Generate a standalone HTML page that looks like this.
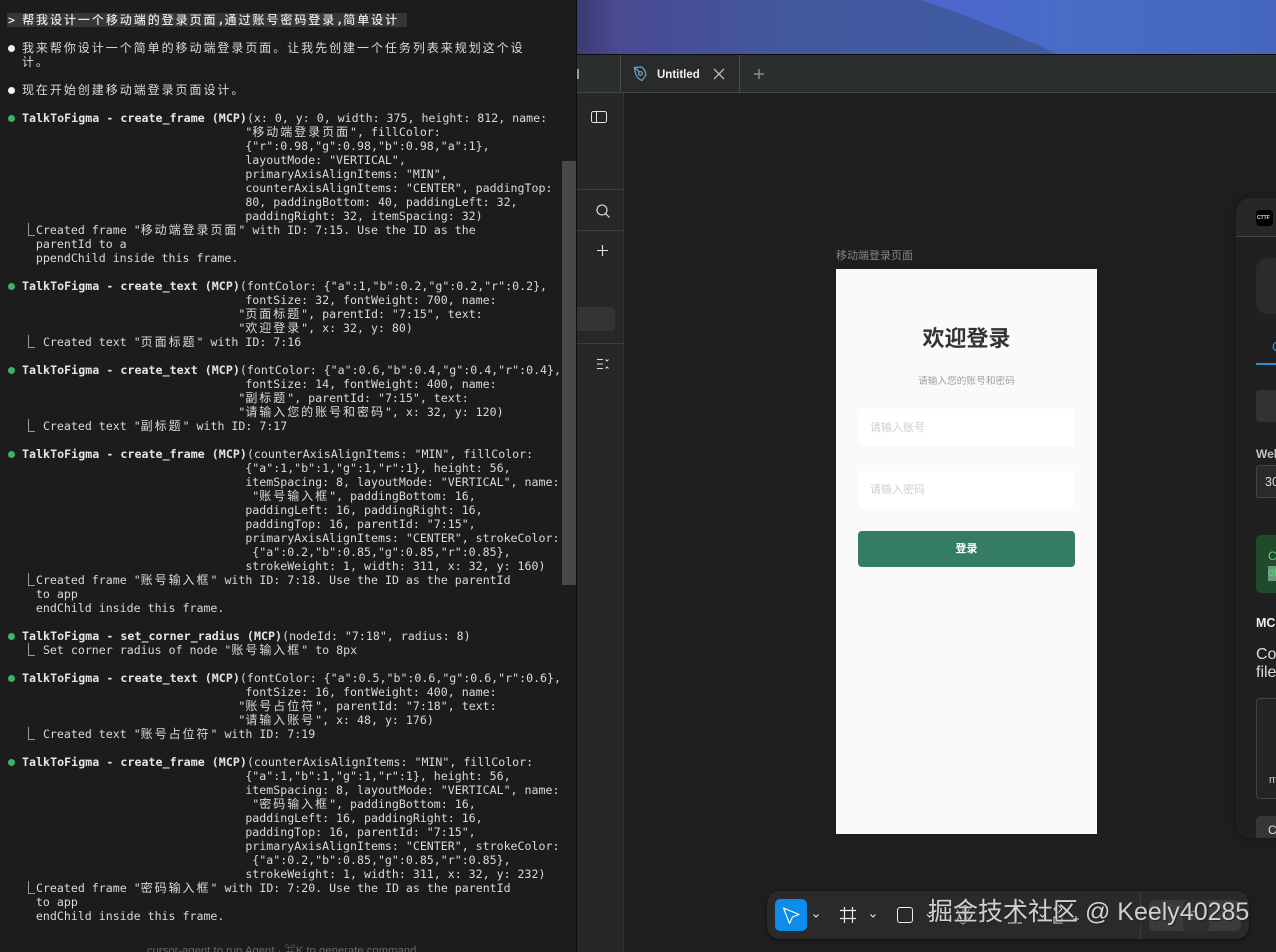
<!DOCTYPE html>
<html lang="zh"><head><meta charset="utf-8"><title>TalkToFigma</title>
<style>
html,body{margin:0;padding:0;background:#1e1e1e}
#r{position:relative;width:1276px;height:952px;overflow:hidden;background:#1e1e1e;font-family:"Liberation Sans","Noto Sans CJK SC",sans-serif}
#r div,#r svg,#r span.a{position:absolute}
#term{left:0;top:0;width:576px;height:952px;background:#1c1c1c;overflow:hidden}
pre{position:absolute;left:8px;top:13px;margin:0;font:11.6px/14px "DejaVu Sans Mono","Noto Sans CJK SC",monospace;color:#dadada;white-space:pre}
u{text-decoration:none;font-size:12px;letter-spacing:1.96px;line-height:0}
b{font-weight:700;color:#e6e6e6;letter-spacing:.05px}
b u{font-weight:500;letter-spacing:1.96px}
i{display:inline-block;position:relative;width:7.02px;height:0;vertical-align:baseline}
i:before{content:"";position:absolute;left:-1px;top:-11px;width:6px;height:12px;border-left:1px solid #9a9a9a;border-bottom:1px solid #9a9a9a}
.d{width:7px;height:7px;border-radius:50%;left:8px;background:#3eb36a}
.w{background:#f2f2f2}
.t{white-space:nowrap;line-height:1}
</style></head><body><div id="r">

<svg style="left:576px;top:0" width="700" height="54" viewBox="0 0 700 54">
<defs><linearGradient id="g" x1="0" x2="1" y1="0" y2="0"><stop offset="0" stop-color="#3a3a72"/><stop offset=".06" stop-color="#4a4a92"/><stop offset=".3" stop-color="#42589c"/><stop offset=".7" stop-color="#3f5ca4"/></linearGradient>
<linearGradient id="h" x1="0" x2="1" y1="0" y2="0"><stop offset="0" stop-color="#4f64cf"/><stop offset=".4" stop-color="#476dc6"/><stop offset="1" stop-color="#4666bd"/></linearGradient></defs>
<rect width="700" height="54" fill="url(#g)"/>
<path d="M344 0C400 18 445 38 482 54H700V0Z" fill="url(#h)"/>
</svg>
<div style="left:576px;top:54px;width:700px;height:1px;background:#0c0c10"></div>

<div style="left:576px;top:55px;width:700px;height:38px;background:#2b302e;border-bottom:1px solid #454846;box-sizing:border-box"></div>
<div style="left:620px;top:55px;width:118px;height:37px;background:#292a2a;border-left:1px solid #4a4c4b;border-right:1px solid #4a4c4b"></div>
<div style="left:577px;top:69px;width:2px;height:10px;background:#9a9a9a"></div>
<svg style="left:632px;top:65px" width="16" height="18" viewBox="0 0 16 18" fill="none" stroke="#6da6d4" stroke-width="1.2"><path d="M2.5 2.500L9 2c3 1 4.500 4.500 5 8l-4 5.500C6 14 3 10 2.500 2.500Z"/><circle cx="8.500" cy="8.500" r="1.800"/><path d="M3 3l4.500 4"/></svg>
<div class="t" style="left:657px;top:69px;font-size:11.500px;font-weight:700;color:#f0f0f0;line-height:13px">Untitled</div>
<svg style="left:712px;top:67px" width="14" height="14" fill="none" stroke="#b5b5b5" stroke-width="1.400"><path d="M2 2l10 10M12 2L2 12"/></svg>
<svg style="left:753px;top:68px" width="12" height="12" fill="none" stroke="#8a8a8a" stroke-width="1.500"><path d="M6 1v10M1 6h10"/></svg>

<div style="left:576px;top:93px;width:48px;height:859px;background:#272727;border-right:1px solid #333;box-sizing:border-box"></div>
<div style="left:576px;top:189px;width:48px;height:1px;background:#3d3d3d"></div>
<div style="left:576px;top:230px;width:48px;height:1px;background:#3d3d3d"></div>
<div style="left:576px;top:343px;width:48px;height:1px;background:#3d3d3d"></div>
<div style="left:576px;top:307px;width:39px;height:24px;background:#343434;border-radius:0 4px 4px 0"></div>
<svg style="left:590px;top:110px" width="18" height="14" fill="none" stroke="#e4e4e4" stroke-width="1"><rect x="1.500" y="1.500" width="15" height="11" rx="2"/><path d="M6.500 1.500v11"/></svg>
<svg style="left:595px;top:203px" width="16" height="16" fill="none" stroke="#e8e8e8" stroke-width="1.100"><circle cx="7" cy="7" r="5"/><path d="M10.800 10.800L14.500 14.500"/></svg>
<svg style="left:596px;top:244px" width="13" height="13" fill="none" stroke="#e8e8e8" stroke-width="1.100"><path d="M6.500 1v11M1 6.500h11"/></svg>
<svg style="left:596px;top:358px" width="14" height="12" fill="none" stroke="#dcdcdc" stroke-width="1"><path d="M1 1.500h6M1 6h6M1 10.500h6M9.500 1.500l1.500 1.500 1.500-1.500M9.500 10.500l1.500-1.500 1.500 1.500"/></svg>

<div class="t" style="left:836px;top:250px;font-size:11px;color:#858585;line-height:12px">移动端登录页面</div>
<div style="left:836px;top:269px;width:261px;height:565px;background:#fafafa"></div>
<div class="t" style="left:836px;top:327px;width:261px;text-align:center;font-size:22px;font-weight:700;color:#333;line-height:24px">欢迎登录</div>
<div class="t" style="left:836px;top:376px;width:261px;text-align:center;font-size:9.700px;color:#a0a0a0;line-height:11px">请输入您的账号和密码</div>
<div style="left:859px;top:409px;width:215px;height:37px;background:#fff"></div>
<div class="t" style="left:870px;top:422px;font-size:11px;color:#cfcfcf;line-height:13px">请输入账号</div>
<div style="left:859px;top:471px;width:215px;height:37px;background:#fff"></div>
<div class="t" style="left:870px;top:484px;font-size:11px;color:#cfcfcf;line-height:13px">请输入密码</div>
<div style="left:858px;top:531px;width:217px;height:36px;background:#347d63;border-radius:4px"></div>
<div class="t" style="left:858px;top:543px;width:217px;text-align:center;font-size:11px;font-weight:700;color:#fff;line-height:13px">登录</div>

<div style="left:1236px;top:198px;width:60px;height:640px;background:#202020;border-radius:14px 0 0 14px;overflow:hidden;box-shadow:-1px 0 6px rgba(0,0,0,.3)">
<div style="left:0;top:0;width:60px;height:39px;background:#272727;border-bottom:1px solid #444;box-sizing:border-box"></div>
<div style="left:20px;top:12px;width:17px;height:16px;background:#000;border-radius:4px"></div>
<div class="t" style="left:21px;top:17px;font-size:5px;font-weight:700;color:#ddd;line-height:6px">CTTF</div>
<div style="left:20px;top:60px;width:40px;height:56px;background:#2b2b2b;border-radius:12px 0 0 12px"></div>
<div class="t" style="left:36px;top:141px;font-size:13px;color:#2a9ae0;line-height:15px">C</div>
<div style="left:20px;top:165px;width:40px;height:2px;background:#2a8fd0"></div>
<div style="left:20px;top:192px;width:40px;height:32px;background:#323232;border-radius:4px"></div>
<div class="t" style="left:20px;top:249px;font-size:12px;font-weight:700;color:#c4c4c4;line-height:14px">Wel</div>
<div style="left:20px;top:267px;width:40px;height:33px;background:#2a2a2a;border:1px solid #454545;border-radius:3px;box-sizing:border-box"></div>
<div class="t" style="left:29px;top:277px;font-size:12.500px;color:#ddd;line-height:14px">30</div>
<div style="left:20px;top:337px;width:40px;height:58px;background:#1f4a2c;border-radius:5px"></div>
<div class="t" style="left:32px;top:351px;font-size:12px;color:#52d47c;line-height:14px">C</div>
<div style="left:32px;top:368px;width:10px;height:15px;background:#6c9a78"></div>
<div class="t" style="left:32px;top:369px;font-size:11px;color:#52d47c;line-height:13px">of</div>
<div class="t" style="left:20px;top:418px;font-size:12.500px;font-weight:700;color:#eee;line-height:14px">MC</div>
<div class="t" style="left:20px;top:448px;font-size:16px;color:#ddd;line-height:18px">Co<br>file</div>
<div style="left:20px;top:500px;width:40px;height:101px;background:#242424;border:1px solid #444;border-radius:4px;box-sizing:border-box"></div>
<div class="t" style="left:33px;top:576px;font-size:11px;color:#ccc;line-height:13px">m</div>
<div style="left:20px;top:618px;width:40px;height:24px;background:#363636;border-radius:5px 0 0 0"></div>
<div class="t" style="left:32px;top:625px;font-size:12px;color:#ddd;line-height:14px">C</div>
</div>

<div style="left:767px;top:891px;width:482px;height:48px;background:#2a2a2a;border-radius:13px;box-shadow:0 1px 3px rgba(0,0,0,.5)"></div>
<div style="left:775px;top:899px;width:32px;height:32px;background:#0d8de9;border-radius:5px"></div>
<svg style="left:781px;top:905px" width="20" height="20" fill="none" stroke="#fff" stroke-width="1.100" stroke-linejoin="round"><path d="M2.500 3L18 9.500l-6.500 2.500-3 6.500Z"/></svg>
<svg style="left:767px;top:891px" width="482" height="48" fill="none" stroke="#f0f0f0" stroke-width="1">
<path d="M46.500 23.500l2.500 2.500 2.500-2.500M103.500 23.500l2.500 2.500 2.500-2.500M160 23.500l2.500 2.500 2.500-2.500M273 23.500l2.500 2.500 2.500-2.500"/>
<path d="M73 19.500h16M73 27.500h16M77.500 16v16M85.500 16v16" stroke-width="1.200"/>
<rect x="130.500" y="16.500" width="15" height="15" rx="2.500"/>
<path d="M190 18c2-5 10-5 12 0l-3 6 3 5-6 4-6-4 3-5zM196 14v10" stroke="#bbb"/>
<path d="M248 14v18M241 32h14" stroke="#ddd"/>
<path d="M291 14l4 4-4 4-4-4zM287 26h8v6h-8zM306 28h6M309 25v6" stroke="#ddd"/>
</svg>
<div style="left:1149px;top:900px;width:92px;height:31px;background:#3b3b3b;border-radius:6px"></div>
<div style="left:1183px;top:900px;width:26px;height:31px;background:#2f2f2f;border-radius:5px"></div>
<div class="t" style="left:1190px;top:908px;font-size:13px;color:#4a8fc8;line-height:15px">R</div>
<div style="left:1140px;top:891px;width:1px;height:48px;background:#3a3a3a"></div>

<div id="term">
<div style="left:7px;top:13px;width:400px;height:14px;background:#363636"></div>
<pre><b>&gt; </b><b><u>帮我设计一个移动端的登录页面</u>,<u>通过账号密码登录</u>,<u>简单设计</u></b>

  <u>我来帮你设计一个简单的移动端登录页面。让我先创建一个任务列表来规划这个设</u>
  <u>计。</u>

  <u>现在开始创建移动端登录页面设计。</u>

  <b>TalkToFigma - create_frame (MCP)</b>(x: 0, y: 0, width: 375, height: 812, name:
                                  "<u>移动端登录页面</u>", fillColor:
                                  {"r":0.98,"g":0.98,"b":0.98,"a":1},
                                  layoutMode: "VERTICAL",
                                  primaryAxisAlignItems: "MIN",
                                  counterAxisAlignItems: "CENTER", paddingTop:
                                  80, paddingBottom: 40, paddingLeft: 32,
                                  paddingRight: 32, itemSpacing: 32)
   <i></i>Created frame "<u>移动端登录页面</u>" with ID: 7:15. Use the ID as the
    parentId to a
    ppendChild inside this frame.

  <b>TalkToFigma - create_text (MCP)</b>(fontColor: {"a":1,"b":0.2,"g":0.2,"r":0.2},
                                  fontSize: 32, fontWeight: 700, name:
                                 "<u>页面标题</u>", parentId: "7:15", text:
                                 "<u>欢迎登录</u>", x: 32, y: 80)
   <i></i> Created text "<u>页面标题</u>" with ID: 7:16

  <b>TalkToFigma - create_text (MCP)</b>(fontColor: {"a":0.6,"b":0.4,"g":0.4,"r":0.4},
                                  fontSize: 14, fontWeight: 400, name:
                                 "<u>副标题</u>", parentId: "7:15", text:
                                 "<u>请输入您的账号和密码</u>", x: 32, y: 120)
   <i></i> Created text "<u>副标题</u>" with ID: 7:17

  <b>TalkToFigma - create_frame (MCP)</b>(counterAxisAlignItems: "MIN", fillColor:
                                  {"a":1,"b":1,"g":1,"r":1}, height: 56,
                                  itemSpacing: 8, layoutMode: "VERTICAL", name:
                                   "<u>账号输入框</u>", paddingBottom: 16,
                                  paddingLeft: 16, paddingRight: 16,
                                  paddingTop: 16, parentId: "7:15",
                                  primaryAxisAlignItems: "CENTER", strokeColor:
                                   {"a":0.2,"b":0.85,"g":0.85,"r":0.85},
                                  strokeWeight: 1, width: 311, x: 32, y: 160)
   <i></i>Created frame "<u>账号输入框</u>" with ID: 7:18. Use the ID as the parentId
    to app
    endChild inside this frame.

  <b>TalkToFigma - set_corner_radius (MCP)</b>(nodeId: "7:18", radius: 8)
   <i></i> Set corner radius of node "<u>账号输入框</u>" to 8px

  <b>TalkToFigma - create_text (MCP)</b>(fontColor: {"a":0.5,"b":0.6,"g":0.6,"r":0.6},
                                  fontSize: 16, fontWeight: 400, name:
                                 "<u>账号占位符</u>", parentId: "7:18", text:
                                 "<u>请输入账号</u>", x: 48, y: 176)
   <i></i> Created text "<u>账号占位符</u>" with ID: 7:19

  <b>TalkToFigma - create_frame (MCP)</b>(counterAxisAlignItems: "MIN", fillColor:
                                  {"a":1,"b":1,"g":1,"r":1}, height: 56,
                                  itemSpacing: 8, layoutMode: "VERTICAL", name:
                                   "<u>密码输入框</u>", paddingBottom: 16,
                                  paddingLeft: 16, paddingRight: 16,
                                  paddingTop: 16, parentId: "7:15",
                                  primaryAxisAlignItems: "CENTER", strokeColor:
                                   {"a":0.2,"b":0.85,"g":0.85,"r":0.85},
                                  strokeWeight: 1, width: 311, x: 32, y: 232)
   <i></i>Created frame "<u>密码输入框</u>" with ID: 7:20. Use the ID as the parentId
    to app
    endChild inside this frame.</pre>
<div class="d w" style="top:45px"></div>
<div class="d w" style="top:87px"></div>
<div class="d" style="top:115px"></div>
<div class="d" style="top:283px"></div>
<div class="d" style="top:367px"></div>
<div class="d" style="top:451px"></div>
<div class="d" style="top:633px"></div>
<div class="d" style="top:675px"></div>
<div class="d" style="top:759px"></div>
<div class="t" style="left:147px;top:945px;font-size:11.300px;color:#6a6a6a;line-height:12px">cursor-agent to run Agent · ⌘K to generate command</div>
<div style="left:562px;top:161px;width:14px;height:424px;background:#484848"></div>
</div>
<div style="left:576px;top:0;width:1px;height:952px;background:#0e0e0e"></div>

<div class="t" style="left:928px;top:897px;font-size:25px;color:#d0d0d0;line-height:30px;text-shadow:1px 1px 1px #222">掘金技术社区 @ Keely40285</div>

</div></body></html>
